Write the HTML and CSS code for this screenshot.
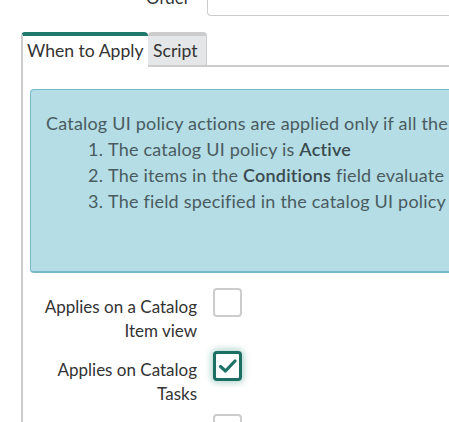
FILE: index.html
```html
<!DOCTYPE html>
<html>
<head>
<meta charset="utf-8">
<link rel="stylesheet" href="styles.css">
</head>
<body>
<div class="order-row">
  <div class="order-label">Order</div>
  <div class="order-input"></div>
</div>
<div class="tabs">
  <div class="tab tab-active">When to Apply</div>
  <div class="tab tab-script">Script</div>
  <div class="tab-rest"></div>
</div>
<div class="panel">
  <div class="info">
    <p class="info-lead">Catalog UI policy actions are applied only if all the following are true:</p>
    <ol class="info-list">
      <li>The catalog UI policy is <b>Active</b></li>
      <li>The items in the <b>Conditions</b> field evaluate to true</li>
      <li>The field specified in the catalog UI policy is on the form</li>
    </ol>
  </div>
  <div class="field">
    <div class="field-label">Applies on a Catalog Item view</div>
    <div class="check"></div>
  </div>
  <div class="field">
    <div class="field-label">Applies on Catalog Tasks</div>
    <div class="check check-on">
      <svg width="20" height="16" viewBox="0 0 20 16"><path d="M2.5 8.5 L7.5 13 L17 3" fill="none" stroke="#1d7368" stroke-width="3.2" stroke-linecap="round" stroke-linejoin="round"/></svg>
    </div>
  </div>
  <div class="field">
    <div class="field-label">Applies on Requested Items</div>
    <div class="check"></div>
  </div>
</div>
</body>
</html>
```
FILE: styles.css
```css
html, body {
  margin: 0;
  padding: 0;
  background: #fff;
  overflow: hidden;
}
body {
  font-family: Lato, "Open Sans", sans-serif;
  font-size: 17px;
  color: #333;
  width: 449px;
  height: 422px;
}
.order-row {
  display: flex;
  height: 34px;
  margin-top: -18px;
}
.order-label {
  width: 190px;
  text-align: right;
  line-height: 24px;
  padding-top: 4px;
}
.order-input {
  margin-left: 17px;
  flex: 1;
  border: 1px solid #ccc;
  border-right: none;
  border-radius: 0 0 0 4px;
  box-sizing: border-box;
  height: 34px;
}
.tabs {
  display: flex;
  margin-top: 16px;
  margin-left: 21px;
  height: 35px;
}
.tab {
  box-sizing: border-box;
  font-size: 17.6px;
  line-height: 29px;
  padding: 0 4px;
  border-top: 4px solid #ccc;
  border-radius: 4px 4px 0 0;
  white-space: nowrap;
}
.tab-active {
  width: 127px;
  border-top-color: #1f7a6c;
  border-left: 2px solid #ccc;
  background: #fff;
}
.tab-script {
  width: 59px;
  padding-left: 5px;
  background: #e4e6e7;
  border-bottom: 2px solid #ccc;
  border-right: 1px solid #ccc;
}
.tab-rest {
  flex: 1;
  border-bottom: 2px solid #ccc;
}
.panel {
  margin-left: 21px;
  border-left: 2px solid #ccc;
  padding: 22px 0 40px 7px;
}
.info {
  background: #b4dde5;
  border: 1px solid #77b8c7;
  border-bottom-width: 2px;
  border-right: none;
  border-radius: 4px 0 0 4px;
  padding: 20px 0 0 15px;
  height: 161px;
  color: #4a5b60;
  font-size: 18px;
  letter-spacing: 0.2px;
  white-space: nowrap;
  overflow: hidden;
}
.info b {
  font-weight: 600;
  color: #3a4a4f;
}
.info-lead {
  margin: 0;
  line-height: 26px;
}
.info-list {
  margin: 0;
  padding-left: 62px;
  line-height: 26px;
}
.field {
  display: grid;
  grid-template-columns: 167px 30px;
  column-gap: 16px;
  align-items: start;
}
.info + .field {
  margin-top: 15px;
}
.field + .field {
  margin-top: 8px;
}
.field-label {
  text-align: right;
  line-height: 24px;
  padding-top: 7px;
  height: 48px;
  overflow: hidden;
  white-space: normal;
}
.check {
  box-sizing: border-box;
  width: 29px;
  height: 29px;
  border: 2px solid #ccc;
  border-radius: 4px;
  background: #fff;
}
.check-on {
  height: 30px;
  border: 3px solid #1d6f64;
  box-shadow: 0 0 6px 2px rgba(40, 140, 120, 0.35);
  display: flex;
  align-items: center;
  justify-content: center;
}
```
